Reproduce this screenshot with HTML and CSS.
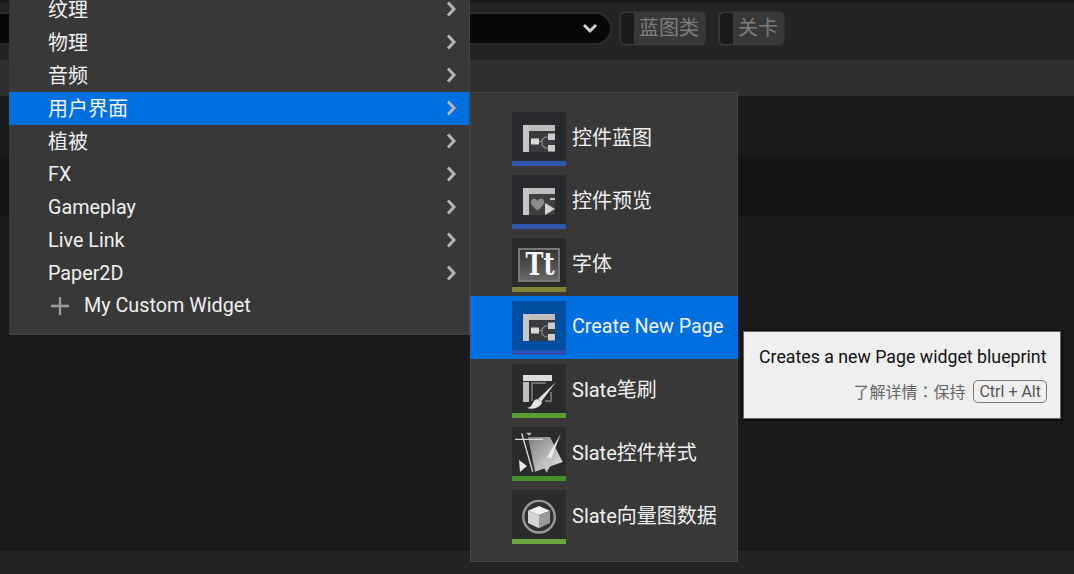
FILE: index.html
```html
<html>
  <head>
    <meta charset="utf-8">
    <link rel="stylesheet" href="styles.css">
  </head>
  <body>
    <div class="toolbar">
      <div class="combo">
        <svg class="combo-arrow" width="16" height="12" viewBox="0 0 16 12"><path d="M2 2 L8 8 L14 2" fill="none" stroke="#d0d0d0" stroke-width="3"/></svg>
      </div>
      <div class="toggle"><span class="toggle-box"></span><span class="toggle-txt">蓝图类</span></div>
      <div class="toggle toggle-level"><span class="toggle-box"></span><span class="toggle-txt">关卡</span></div>
    </div>
    <div class="band"></div>
    <div class="viewport">
      <div class="view-a"></div>
      <div class="view-b"></div>
    </div>
    <div class="footer"></div>

    <div class="menu menu-main">
      <div class="row"><span>纹理</span><svg class="chev" width="12" height="16" viewBox="0 0 12 16"><path d="M2 1.500 L8 8 L2 14.500" /></svg></div>
      <div class="row"><span>物理</span><svg class="chev" width="12" height="16" viewBox="0 0 12 16"><path d="M2 1.500 L8 8 L2 14.500" /></svg></div>
      <div class="row"><span>音频</span><svg class="chev" width="12" height="16" viewBox="0 0 12 16"><path d="M2 1.500 L8 8 L2 14.500" /></svg></div>
      <div class="row row-on"><span>用户界面</span><svg class="chev" width="12" height="16" viewBox="0 0 12 16"><path d="M2 1.500 L8 8 L2 14.500" /></svg></div>
      <div class="row"><span>植被</span><svg class="chev" width="12" height="16" viewBox="0 0 12 16"><path d="M2 1.500 L8 8 L2 14.500" /></svg></div>
      <div class="row"><span class="lat">FX</span><svg class="chev" width="12" height="16" viewBox="0 0 12 16"><path d="M2 1.500 L8 8 L2 14.500" /></svg></div>
      <div class="row"><span class="lat">Gameplay</span><svg class="chev" width="12" height="16" viewBox="0 0 12 16"><path d="M2 1.500 L8 8 L2 14.500" /></svg></div>
      <div class="row"><span class="lat">Live Link</span><svg class="chev" width="12" height="16" viewBox="0 0 12 16"><path d="M2 1.500 L8 8 L2 14.500" /></svg></div>
      <div class="row"><span class="lat">Paper2D</span><svg class="chev" width="12" height="16" viewBox="0 0 12 16"><path d="M2 1.500 L8 8 L2 14.500" /></svg></div>
      <div class="row row-add">
        <svg class="plus" width="18" height="18" viewBox="0 0 18 18"><path d="M9 0 V18 M0 9 H18" stroke="#9a9a9a" stroke-width="2.4"/></svg>
        <span class="lat">My Custom Widget</span>
      </div>
    </div>

    <div class="menu menu-sub">
      <div class="item">
        <div class="thumb bar-blue">
          <svg width="54" height="49" viewBox="0 0 54 49"><use href="#widget"/></svg>
        </div>
        <span>控件蓝图</span>
      </div>
      <div class="item">
        <div class="thumb bar-blue">
          <svg width="54" height="49" viewBox="0 0 54 49">
            <rect x="17" y="19" width="26" height="21" fill="#3f3f3f"/>
            <rect x="11" y="13" width="6" height="27" fill="#c6c6c6"/>
            <rect x="17" y="13" width="26" height="6" fill="#bdbdbd"/>
            <rect x="38" y="23" width="5" height="2" fill="#c8c8c8"/>
            <path d="M19 27 C19 22.500 24 22.500 25.500 26 C27 22.500 32 22.500 32 27 C32 31 28 33 25.500 35.500 C23 33 19 31 19 27 Z" fill="#8c8c8c"/>
            <path d="M33 28 L43 34 L33 40 Z" fill="#d4d4d4"/>
          </svg>
        </div>
        <span>控件预览</span>
      </div>
      <div class="item">
        <div class="thumb bar-olive">
          <svg width="54" height="49" viewBox="0 0 54 49">
            <defs>
              <linearGradient id="tt" x1="0" y1="0" x2="0" y2="1"><stop offset="0" stop-color="#333"/><stop offset="1" stop-color="#6a6a6a"/></linearGradient>
            </defs>
            <rect x="7" y="11" width="40" height="32" fill="url(#tt)" stroke="#777" stroke-width="2"/>
            <text x="13.500" y="37" textLength="29" lengthAdjust="spacingAndGlyphs" class="tt-icon">Tt</text>
          </svg>
        </div>
        <span>字体</span>
      </div>
      <div class="item item-on">
        <div class="thumb bar-blue">
          <svg width="54" height="49" viewBox="0 0 54 49"><use href="#widget"/></svg>
        </div>
        <span class="lat">Create New Page</span>
      </div>
      <div class="item">
        <div class="thumb bar-green">
          <svg width="54" height="49" viewBox="0 0 54 49">
            <rect x="11" y="11" width="29" height="6" fill="#dcdcdc"/>
            <rect x="11" y="18" width="6" height="20" fill="#c0c0c0"/>
            <path d="M20 37 V19 H34 M39 28 V37 H33" fill="none" stroke="#6d6d6d" stroke-width="2"/>
            <path d="M44 18 L26 35 L29 38 Z" fill="#e0e0e0"/>
            <path d="M25 35 C21 36 21 40 19 42 C18 43 16.500 43.500 15 44 C22 46 29 43 30 38 Z" fill="#e6e6e6"/>
          </svg>
        </div>
        <span>Slate笔刷</span>
      </div>
      <div class="item">
        <div class="thumb bar-green2">
          <svg width="54" height="49" viewBox="0 0 54 49">
            <defs>
              <linearGradient id="sheet" x1="0" y1="0" x2="1" y2="1"><stop offset="0" stop-color="#7c7c7c"/><stop offset="1" stop-color="#e8e8e8"/></linearGradient>
            </defs>
            <path d="M16 10 H38 L50.700 35 L23 44.700 Z" fill="url(#sheet)"/>
            <path d="M3 12.300 H31 M9.700 6.300 L20.700 44.700" stroke="#dcdcdc" stroke-width="1.300" fill="none"/>
            <path d="M14 5.700 H19.700 L17.300 8.700 Z" fill="#bdbdbd"/>
            <path d="M7 33 L15 39 L8 45 Z" fill="#e8e8e8"/>
            <path d="M48.700 7 L34.500 31 L38.500 33 Z" fill="#eeeeee"/>
            <path d="M32 32 C35 29 40 30 39.700 35 C39.500 39 36 41 35 46 C33 42 28.500 37 32 32 Z" fill="#c4c4c4"/>
          </svg>
        </div>
        <span>Slate控件样式</span>
      </div>
      <div class="item">
        <div class="thumb bar-green3">
          <svg width="54" height="49" viewBox="0 0 54 49">
            <circle cx="27" cy="26.700" r="15.800" fill="#303130" stroke="#9a9a9a" stroke-width="2.400"/>
            <path d="M27 16 L38 20.700 L27 25 L16 20.700 Z" fill="#f2f2f2"/>
            <path d="M16 20.700 L27 25 V38.300 L16 33 Z" fill="#d4d4d4"/>
            <path d="M38 20.700 L27 25 V38.300 L38 33 Z" fill="#9a9a9a"/>
          </svg>
        </div>
        <span>Slate向量图数据</span>
      </div>
    </div>

    <div class="tip">
      <div class="tip-title">Creates a new Page widget blueprint</div>
      <div class="tip-more">
        <span>了解详情<span class="colon">：</span>保持</span>
        <span class="keys">Ctrl + Alt</span>
      </div>
    </div>

    <svg class="defs" width="0" height="0">
      <defs>
        <g id="widget">
          <rect x="17" y="19" width="26" height="21" fill="#3a3b3e"/>
          <rect x="11" y="13" width="6" height="27" fill="#c6c6c6"/>
          <rect x="17" y="13" width="26" height="6" fill="#bdbdbd"/>
          <rect x="19" y="26.500" width="8" height="6" fill="#dadada"/>
          <rect x="36" y="21.500" width="7" height="6.500" fill="#cccccc"/>
          <rect x="36" y="33" width="7" height="6.500" fill="#cccccc"/>
          <path d="M27 29.500 H30 M36 25 H33 L30 28 V33 L33 36 H36" fill="none" stroke="#8a8a8a" stroke-width="1.200"/>
        </g>
      </defs>
    </svg>
  </body>
</html>
```

FILE: styles.css
```css
* {
  box-sizing: border-box;
}
html,
body {
  margin: 0;
  height: 100%;
}
body {
  width: 1074px;
  height: 574px;
  position: relative;
  overflow: hidden;
  background: #1a1a1a;
  padding-top: 3px;
  font-family: Roboto, "Noto Sans CJK SC", sans-serif;
  color: #f0f0f0;
}
.toolbar {
  height: 57px;
  background: #242424;
  display: flex;
  align-items: flex-start;
  padding-top: 8px;
}
.combo {
  width: 612px;
  height: 33px;
  margin-top: 1px;
  background: #070707;
  border: 2px solid #2c2c2c;
  border-left: 0;
  border-radius: 0 17px 17px 0;
  display: flex;
  align-items: center;
  justify-content: flex-end;
  padding-right: 12px;
}
.toggle {
  height: 35px;
  margin-left: 7px;
  background: #383838;
  border: 1px solid #2c2c2c;
  border-radius: 5px;
  display: flex;
  color: #7d7d7d;
  font-size: 20px;
  overflow: hidden;
}
.toggle-level {
  margin-left: 12px;
}
.toggle-box {
  width: 13px;
  margin: 1px 0 1px 1px;
  background: #1a1a1a;
  border-radius: 4px 0 0 4px;
}
.toggle-txt {
  padding: 0 6px 0 5px;
  line-height: 32px;
}
.band {
  height: 36px;
  background: #2f2f2f;
}
.viewport {
  height: 455px;
}
.view-a {
  height: 60px;
  background: #1b1b1b;
}
.view-b {
  height: 59px;
  background: #151515;
}
.footer {
  height: 23px;
  background: #242424;
}

.menu {
  position: absolute;
  background: #383838;
  border: 1px solid #444;
  font-size: 20px;
  line-height: 24px;
}
.lat {
  font-size: 19.750px;
}
.menu-main {
  left: 9px;
  top: -7px;
  width: 461px;
  height: 342px;
  border-left: 0;
  border-top: 0;
}
.row {
  height: 33px;
  display: flex;
  align-items: center;
  justify-content: space-between;
  padding: 0 11px 0 39px;
}
.chev {
  margin-bottom: 1px;
}
.row-on,
.item-on {
  background: #0070e0;
}
.chev path {
  fill: none;
  stroke: #b4b4b4;
  stroke-width: 3;
}
.row-add {
  justify-content: flex-start;
  gap: 15px;
  margin-top: -1px;
  padding-left: 42px;
}
.menu-sub {
  left: 470px;
  top: 92px;
  width: 268px;
  height: 470px;
  padding-top: 14px;
}
.item {
  height: 63px;
  margin: 0 -1px;
  padding-left: 42px;
  display: flex;
  align-items: center;
  gap: 6px;
}
.item span {
  margin-bottom: 2px;
}
.thumb {
  width: 54px;
  height: 54px;
  background: #282a2d;
  border-bottom: 5px solid #2f57ac;
}
.thumb svg {
  display: block;
}
.item-on .thumb {
  background: #004ea3;
  border-bottom-color: #2b4fae;
}
.bar-olive {
  background: #2a2b28;
  border-bottom-color: #84823a;
}
.bar-green {
  background: #2a2c2a;
  border-bottom-color: #5a9c34;
}
.bar-green2 {
  background: #2a2c2a;
  border-bottom-color: #48902c;
}
.bar-green3 {
  background: #2a2c2a;
  border-bottom-color: #6aa53f;
}
.tt-icon {
  font-family: "DejaVu Serif", serif;
  font-weight: bold;
  font-size: 31px;
  fill: #f6f6f6;
}

.tip {
  position: absolute;
  left: 743px;
  top: 331px;
  width: 318px;
  height: 88px;
  background: #efefef;
  border: 1px solid #666;
  box-shadow: 0 0 0 1px #111, 1px 1px 0 1px #0c0c0c;
  padding: 14px 13px 0 15px;
  color: #111;
  font-size: 17.750px;
}
.tip-title {
  line-height: 22px;
  white-space: nowrap;
}
.tip-more {
  margin-top: 11px;
  display: flex;
  justify-content: flex-end;
  align-items: center;
  gap: 8px;
  font-size: 16px;
  color: #666;
}
.colon {
  font-family: "Noto Sans CJK TC", sans-serif;
}
.keys {
  border: 1.500px solid #777;
  border-radius: 5px;
  padding: 0 5px;
  line-height: 21px;
  color: #555;
}
.defs {
  position: absolute;
}
```
